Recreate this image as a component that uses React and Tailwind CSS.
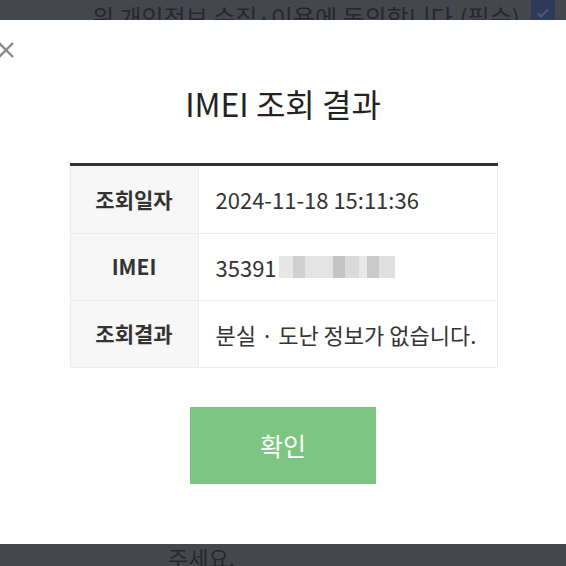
import React from "react";

const font = { fontFamily: '"Noto Sans CJK KR", "Noto Sans", sans-serif' };

export default function App() {
  return (
    <div className="w-[566px] h-[566px] flex flex-col overflow-hidden bg-white" style={font}>
      <div className="h-[20px] bg-[#45474f] flex items-end overflow-hidden shrink-0">
        <div className="flex items-center gap-[11px] ml-[92px] mb-[-14px]">
          <span className="text-[24px] leading-[34px] text-[#26272c] whitespace-nowrap">위 개인정보 수집·이용에 동의합니다.(필수)</span>
          <span className="w-[24px] h-[26px] bg-[#2e3a5a] flex items-center justify-center mt-[-8px]">
            <svg width="14" height="14" viewBox="0 0 14 14"><path d="M2 7.5l3 3 7-7" stroke="#4a5a80" strokeWidth="2" fill="none" /></svg>
          </span>
        </div>
      </div>
      <div className="relative flex-1 flex flex-col items-center">
        <svg className="absolute left-[-3px] top-[21px]" width="18" height="18" viewBox="0 0 18 18">
          <path d="M2 2L16 16M16 2L2 16" stroke="#8a8a8a" strokeWidth="2.4" />
        </svg>
        <h1 className="mt-[62px] text-[32px] leading-[42px] text-[#222] font-normal">IMEI 조회 결과</h1>
        <div className="mt-[39px] w-[428px] ml-[1px] border-t-[3px] border-[#333] text-[22px] text-[#333]">
          <div className="flex h-[68px] border-b border-[#ececec]">
            <div className="w-[129px] bg-[#f7f7f7] border-l border-r border-[#ececec] flex items-center justify-center font-bold text-[21px]">조회일자</div>
            <div className="flex-1 flex items-center pl-[17px] border-r border-[#ececec]">2024-11-18 15:11:36</div>
          </div>
          <div className="flex h-[67px] border-b border-[#ececec]">
            <div className="w-[129px] bg-[#f7f7f7] border-l border-r border-[#ececec] flex items-center justify-center font-bold text-[21px]">IMEI</div>
            <div className="flex-1 flex items-center pl-[17px] border-r border-[#ececec]">
              <span>35391</span>
              <span className="flex h-[22px] ml-[2px]">
                <span className="w-[14px] bg-[#e6e6e6]" />
                <span className="w-[12px] bg-[#cfcfcf]" />
                <span className="w-[28px] bg-[#e4e4e4]" />
                <span className="w-[12px] bg-[#c4c4c4]" />
                <span className="w-[14px] bg-[#dadada]" />
                <span className="w-[8px] bg-[#e8e8e8]" />
                <span className="w-[12px] bg-[#cacaca]" />
                <span className="w-[16px] bg-[#e0e0e0]" />
              </span>
            </div>
          </div>
          <div className="flex h-[67px] border-b border-[#ececec]">
            <div className="w-[129px] bg-[#f7f7f7] border-l border-r border-[#ececec] flex items-center justify-center font-bold text-[21px]">조회결과</div>
            <div className="flex-1 flex items-center pl-[17px] border-r border-[#ececec]">분실 · 도난 정보가 없습니다.</div>
          </div>
        </div>
        <button className="mt-[39px] w-[186px] h-[77px] bg-[#7dc583] text-white text-[25px]">확인</button>
      </div>
      <div className="h-[22px] bg-[#45474f] shrink-0 overflow-hidden">
        <span className="block ml-[168px] mt-[-2px] text-[22px] leading-[30px] text-[#26272c]">주세요.</span>
      </div>
    </div>
  );
}
